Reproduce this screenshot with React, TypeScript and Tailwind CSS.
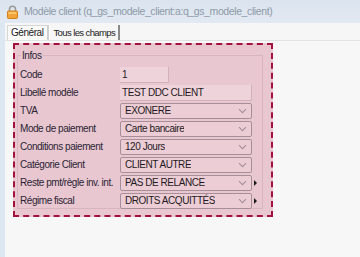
import React from 'react';

interface Field {
    label: string;
    value: string;
    kind: 'input' | 'select';
    width?: string;
    more?: boolean;
}

const fields: Field[] = [
    { label: 'Code', value: '1', kind: 'input', width: 'w-[49px]' },
    { label: 'Libellé modèle', value: 'TEST DDC CLIENT', kind: 'input' },
    { label: 'TVA', value: 'EXONERE', kind: 'select' },
    { label: 'Mode de paiement', value: 'Carte bancaire', kind: 'select' },
    { label: 'Conditions paiement', value: '120 Jours', kind: 'select' },
    { label: 'Catégorie Client', value: 'CLIENT AUTRE', kind: 'select' },
    { label: 'Reste pmt/règle inv. int.', value: 'PAS DE RELANCE', kind: 'select', more: true },
    { label: 'Régime fiscal', value: 'DROITS ACQUITTÉS', kind: 'select', more: true },
];

const Lock = () => (
    <svg width="11" height="14" viewBox="0 0 11 14">
        <path d="M2.5 6.5V4.2a3 3 0 0 1 6 0v2.3" fill="none" stroke="#9a9a9a" strokeWidth="1.6" />
        <rect x="0.5" y="6" width="10" height="7.5" rx="1" fill="#f0a43a" stroke="#d67f14" strokeWidth="1" />
        <rect x="1.5" y="7" width="8" height="2" fill="#f8c56a" />
    </svg>
);

const Chevron = () => (
    <svg width="9" height="6" viewBox="0 0 9 6" className="shrink-0">
        <path d="M1 1.2l3.5 3.5L8 1.2" fill="none" stroke="#a58e99" strokeWidth="1.1" />
    </svg>
);

const FieldRow: React.FC<{ field: Field }> = ({ field }) => (
    <div className="flex items-center h-[16px]">
        <div className="w-[100px] shrink-0 text-[#2b2433] whitespace-nowrap">{field.label}</div>
        {field.kind === 'input' ? (
            <div className={`${field.width ?? 'w-[132px]'} h-[16px] bg-[#efd3db] border-b border-r border-[#d2b1bc] pl-[2px] flex items-center text-[#1f1a22]`}>
                {field.value}
            </div>
        ) : (
            <div className="w-[132px] h-[16px] rounded-[2px] border border-[#a78f99] bg-[#eccdd6] pl-[4px] pr-[4px] flex items-center justify-between text-[#1f1a22]">
                <span className="truncate leading-[14px]">{field.value}</span>
                <Chevron />
            </div>
        )}
        {field.more && (
            <div className="ml-[2px] w-0 h-0 border-y-[3px] border-y-transparent border-l-[3px] border-l-[#1a1a1a]" />
        )}
    </div>
);

export default function App() {
    return (
        <div className="w-[360px] h-[257px] flex flex-col bg-[#f6f6f6] overflow-hidden font-['Liberation_Sans',sans-serif] text-[10px] tracking-[-0.45px] leading-none">
            {/* title bar */}
            <div className="h-[23px] shrink-0 flex items-center pl-[7px] bg-gradient-to-b from-[#dbe4ee] to-[#e2e9f2]">
                <Lock />
                <span className="ml-[6px] text-[10.5px] tracking-[-0.4px] text-[#8e9aa8] whitespace-nowrap">
                    Modèle client (q_gs_modele_client:a:q_gs_modele_client)
                </span>
            </div>
            <div className="flex-1 flex min-h-0">
                <div className="w-[5px] shrink-0 bg-[#dde7f2]" />
                <div className="flex-1 flex flex-col min-w-0">
                    {/* tabs */}
                    <div className="h-[17px] shrink-0 flex items-end pl-[2px] pt-[2px]">
                        <div className="h-[15px] pl-[3px] pr-[4px] flex items-center bg-[#fbfbfb] border-l border-t border-[#d6d6d6] border-r-2 border-r-[#cfcfcf] text-[#222]">
                            Général
                        </div>
                        <div className="h-[15px] pl-[3px] pr-[3px] flex items-center border-r-2 border-r-[#8a8a8a] border-l border-l-[#ffffff] text-[#222] text-[9.5px] tracking-[-0.6px]">
                            Tous les champs
                        </div>
                    </div>
                    {/* tab page */}
                    <div className="flex-1 border-t border-[#e2e2e2] bg-[#f7f7f7] pt-[2px] pl-[8px]">
                        <div className="w-[260px] h-[174px] border-2 border-dashed border-[#a3123f] bg-[#e8c7d1] pl-[2px] pr-[8px] pt-[5px]">
                            <fieldset className="border border-[#d9b5c1] h-[159px] pl-[2px] pt-[6px] m-0">
                                <legend className="ml-[1px] px-[1px] text-[#2b2433] leading-[11px]">Infos</legend>
                                <div className="flex flex-col gap-[2px]">
                                    {fields.map(f => (
                                        <FieldRow key={f.label} field={f} />
                                    ))}
                                </div>
                            </fieldset>
                        </div>
                    </div>
                </div>
            </div>
        </div>
    );
}
